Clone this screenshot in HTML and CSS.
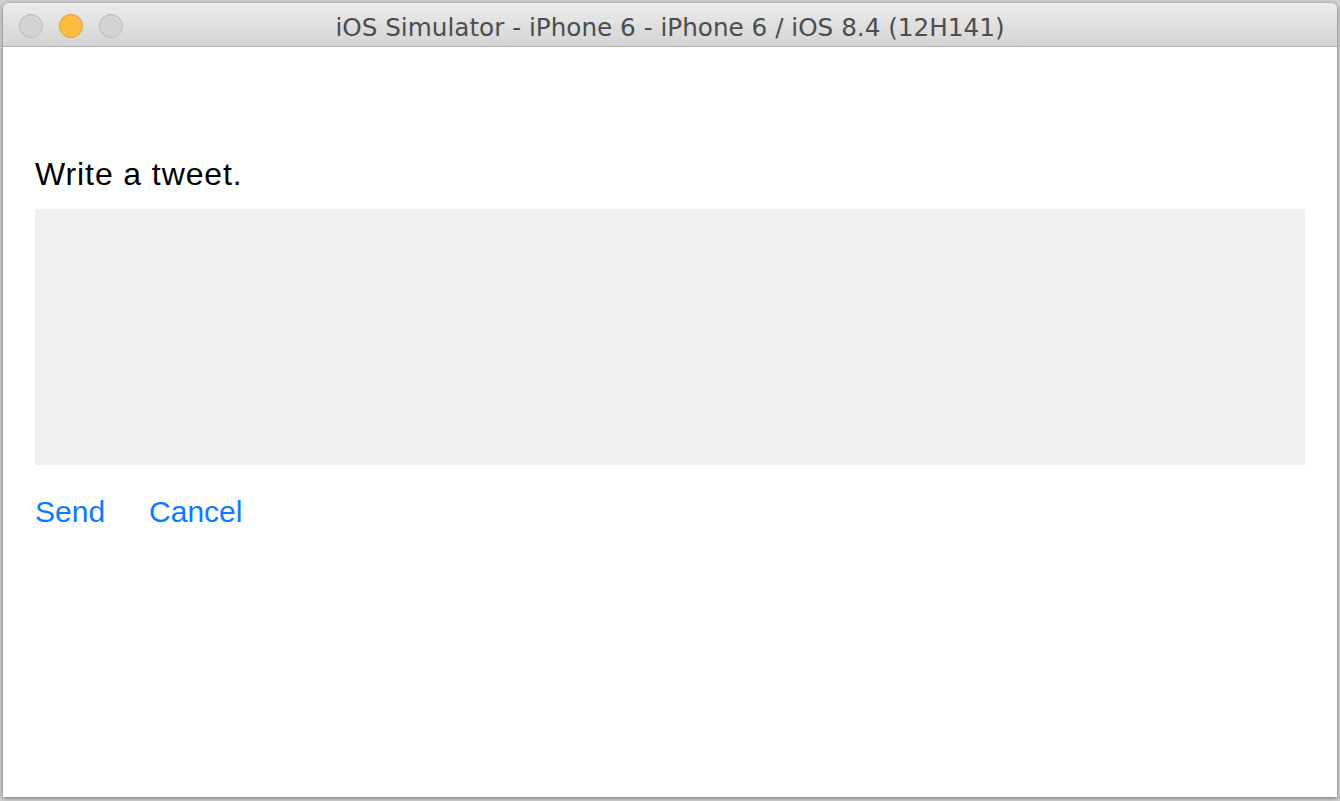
FILE: index.html
```
<!DOCTYPE html>
<html lang="en">
  <head>
    <meta charset="UTF-8" />
    <meta name="viewport" content="width=device-width, initial-scale=1.0" />
    <title>iOS Simulator</title>
    <link rel="stylesheet" href="styles.css">
  </head>
  <body>
    <div class="window">
      <div class="titlebar">
        <div class="lights">
          <span class="light"></span>
          <span class="light yellow"></span>
          <span class="light"></span>
        </div>
        <div class="title">iOS Simulator - iPhone 6 - iPhone 6 / iOS 8.4 (12H141)</div>
      </div>
      <div class="screen">
        <p class="label">Write a tweet.</p>
        <div class="tweet-box"></div>
        <div class="actions">
          <button class="link">Send</button>
          <button class="link">Cancel</button>
        </div>
      </div>
    </div>
  </body>
</html>
```

FILE: styles.css
```
body {
  margin: 0;
  background-color: #cfcfcf;
  font-family: "Liberation Sans", Arial, sans-serif;
  height: 801px;
  overflow: hidden;
}

.window {
  margin: 3px 3px 0 3px;
  width: 1334px;
  height: 794px;
  background-color: #fff;
  border-radius: 6px 6px 0 0;
  box-shadow: 0 1px 4px rgba(0, 0, 0, 0.45);
  overflow: hidden;
  display: flex;
  flex-direction: column;
}

.titlebar {
  height: 41px;
  padding-top: 2px;
  background: linear-gradient(#ececec, #d4d4d4);
  border-bottom: 1px solid #b0b0b0;
  display: flex;
  align-items: center;
  position: relative;
}

.lights {
  display: flex;
  gap: 16px;
  padding-left: 16px;
}

.light {
  width: 24px;
  height: 24px;
  border-radius: 50%;
  background-color: #d3d3d3;
  border: 1px solid #b9b9b9;
  box-sizing: border-box;
}

.light.yellow {
  background-color: #fdbc40;
  border-color: #df9e2b;
}

.title {
  position: absolute;
  left: 0;
  right: 0;
  top: 8px;
  text-align: center;
  font-family: "DejaVu Sans", "Liberation Sans", sans-serif;
  font-size: 24.7px;
  line-height: 34px;
  color: #4d4d4d;
}

.screen {
  padding: 110px 32px 0 32px;
}

.label {
  margin: 0 0 18px 0;
  font-size: 32px;
  line-height: 34px;
  letter-spacing: 0.9px;
  color: #000;
}

.tweet-box {
  height: 256px;
  background-color: #f0f0f0;
}

.actions {
  display: flex;
  gap: 44px;
  margin-top: 30px;
}

.link {
  border: none;
  background: none;
  padding: 0;
  font-family: inherit;
  font-size: 30px;
  line-height: 34px;
  color: #0a7aff;
  cursor: pointer;
}
```
